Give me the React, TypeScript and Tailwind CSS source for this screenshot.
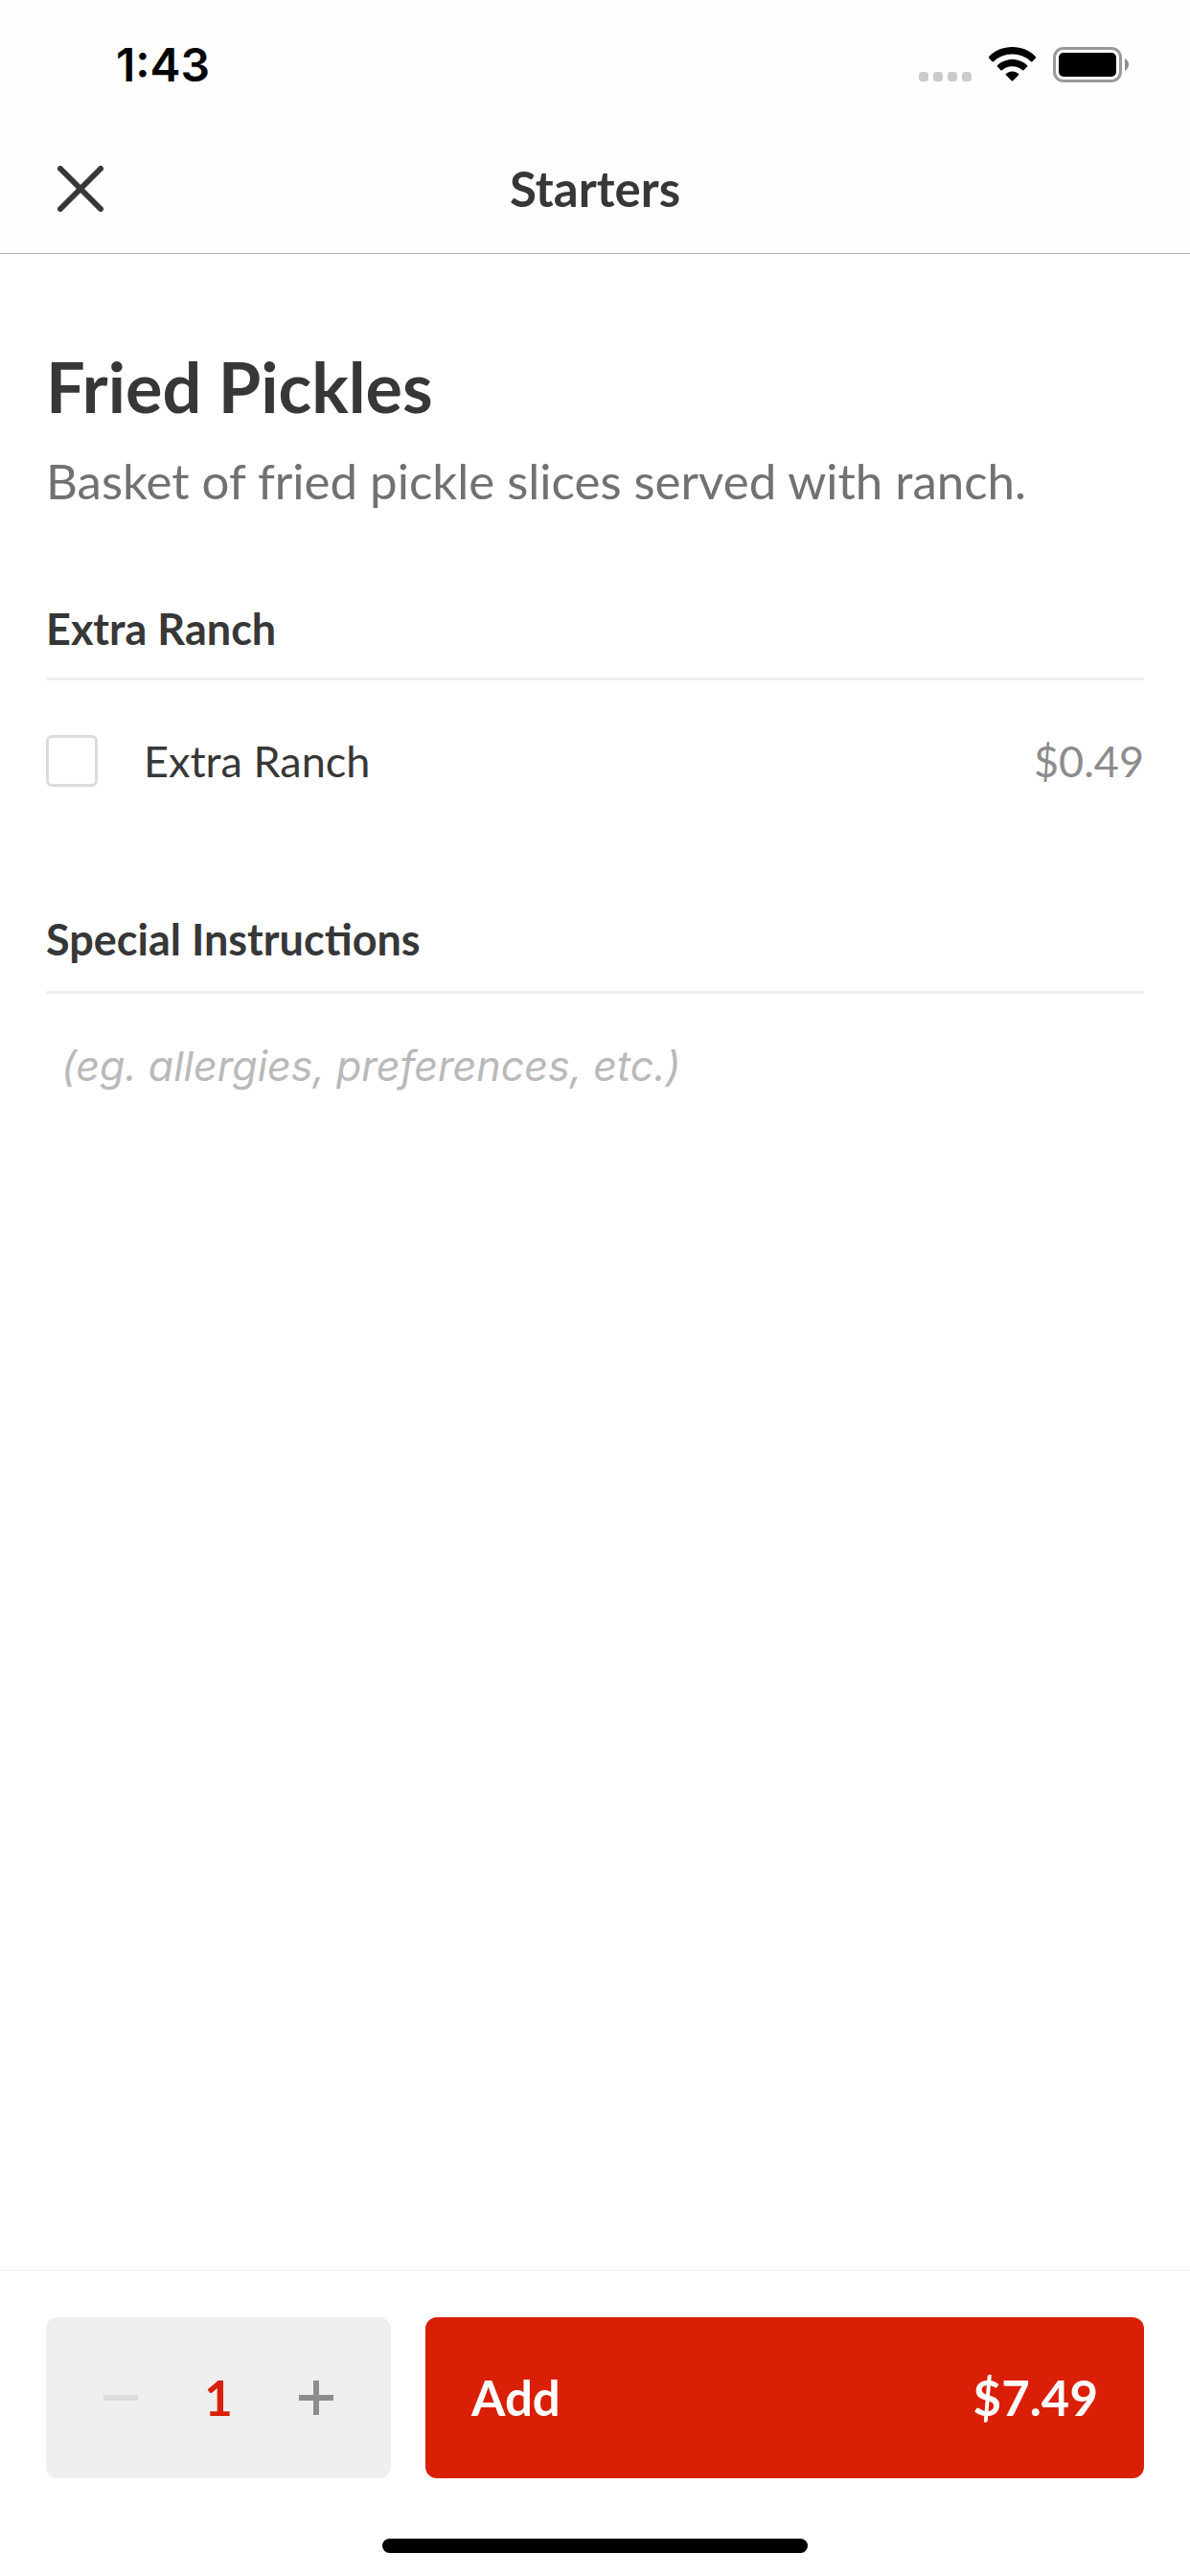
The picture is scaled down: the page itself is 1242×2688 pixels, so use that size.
import { useState } from 'react';

const UNIT_PRICE = 7.49;
const RANCH_PRICE = 0.49;

function SignalDots() {
  return (
    <svg width="55" height="37" viewBox="0 0 55 37" fill="#cbcbcb" aria-hidden="true">
      {[0, 15, 30, 45].map((x) => (
        <rect key={x} x={x} y="26" width="10" height="10" rx="3.5" />
      ))}
    </svg>
  );
}

function WifiIcon() {
  return (
    <svg width="49" height="37" viewBox="0 0 49 37" fill="#000" aria-hidden="true">
      <path d="M24.5 0C34 0 42.600 3.600 49 10.200q.6.700 0 1.400l-3.600 3.600q-.7.600-1.400 0A28 28 0 0 0 24.500 7.500 28 28 0 0 0 5 15.200q-.7.600-1.400 0L0 11.600q-.6-.7 0-1.400C6.400 3.600 15 0 24.500 0z" />
      <path d="M24.500 13C30.500 13 36 15.300 40.100 19.200q.7.700 0 1.400l-3.600 3.600q-.7.600-1.400 0A16 16 0 0 0 24.500 20.300 16 16 0 0 0 13.900 24.200q-.7.600-1.400 0L8.900 20.600q-.7-.7 0-1.400C13 15.300 18.500 13 24.500 13z" />
      <path d="M24.500 25.500c2.500 0 4.800.9 6.600 2.400q.7.700 0 1.400l-5.900 6q-.7.600-1.400 0l-5.900-6q-.7-.7 0-1.400c1.800-1.500 4.100-2.400 6.600-2.400z" />
    </svg>
  );
}

function BatteryIcon() {
  return (
    <svg width="79" height="37" viewBox="0 0 79 37" aria-hidden="true">
      <rect x="1.500" y="1.500" width="69" height="34" rx="9.500" fill="none" stroke="#999" strokeWidth="3" />
      <rect x="6" y="6" width="60" height="25" rx="5" fill="#000" />
      <path d="M75 12c2.500 1.300 4 3.700 4 6.500s-1.500 5.200-4 6.500z" fill="#8c8c8c" />
    </svg>
  );
}

export default function App() {
  const [qty, setQty] = useState(1);
  const [ranch, setRanch] = useState(false);
  const [notes, setNotes] = useState('');

  const total = qty * (UNIT_PRICE + (ranch ? RANCH_PRICE : 0));

  return (
    <div className="flex min-h-screen flex-col bg-white font-['Lato',sans-serif] text-[#373737]">
      <header className="border-b border-[#b2b2b2] bg-[#fefefe]">
        <div className="flex h-[132px] items-center justify-between pt-[3px] pr-16 pl-[121px]">
          <time className="font-['Inter',sans-serif] text-[48px] leading-none font-semibold text-black">1:43</time>
          <div className="flex items-center gap-[18px]">
            <SignalDots />
            <WifiIcon />
            <BatteryIcon />
          </div>
        </div>

        <nav className="grid h-[132px] grid-cols-[1fr_auto_1fr] items-center px-12 pb-[3px]">
          <button type="button" aria-label="Close" className="flex size-[72px] items-center justify-center">
            <svg width="48" height="48" viewBox="0 0 48 48" stroke="#373737" strokeWidth="6" strokeLinecap="round">
              <path d="M3 3l42 42M45 3L3 45" />
            </svg>
          </button>
          <h2 className="text-[51px] leading-[64px] font-bold">Starters</h2>
        </nav>
      </header>

      <main className="flex-1 px-12 pt-24">
        <h1 className="text-[72px] leading-[84px] font-bold">Fried Pickles</h1>
        <p className="mt-[25px] text-[51px] leading-[64px] text-[#717171]">Basket of fried pickle slices served with ranch.</p>

        <section className="mt-24">
          <h3 className="border-b-3 border-[#efefef] pb-[25px] text-[45px] leading-[52px] font-bold">Extra Ranch</h3>
          <label className="mt-[57px] flex h-[54px] items-center gap-12 text-[45px] leading-[52px]">
            <input
              type="checkbox"
              checked={ranch}
              onChange={(e) => setRanch(e.target.checked)}
              className="size-[54px] shrink-0 appearance-none rounded-md border-3 border-[#dcdcdc] bg-white checked:border-[#d91f06] checked:bg-[#d91f06]"
            />
            <span className="flex-1">Extra Ranch</span>
            <span className="text-[#8c8c8c]">${RANCH_PRICE.toFixed(2)}</span>
          </label>
        </section>

        <section className="mt-[133px]">
          <h3 className="border-b-3 border-[#efefef] pb-[28px] text-[45px] leading-[52px] font-bold">
            <label htmlFor="notes">Special Instructions</label>
          </h3>
          <textarea
            id="notes"
            rows={4}
            value={notes}
            onChange={(e) => setNotes(e.target.value)}
            placeholder="(eg. allergies, preferences, etc.)"
            className="mt-12 block w-full resize-none px-4 font-['Inter',sans-serif] text-[43px] leading-[54px] italic outline-none placeholder:text-[#b9b9b9]"
          />
        </section>
      </main>

      <footer className="border-t border-[#efefef] px-12 pt-12 pb-6">
        <div className="flex gap-9">
          <div className="flex h-[168px] w-[360px] items-center justify-between rounded-xl bg-[#efefef] px-12">
            <button
              type="button"
              aria-label="Decrease quantity"
              disabled={qty === 1}
              onClick={() => setQty(qty - 1)}
              className="p-3 text-[#8c8c8c] disabled:text-[#dcdcdc]"
            >
              <svg width="36" height="36" viewBox="0 0 36 36" fill="currentColor">
                <path d="M0 15h36v6H0z" />
              </svg>
            </button>
            <output className="text-[51px] leading-[64px] font-bold text-[#d91f06]">{qty}</output>
            <button
              type="button"
              aria-label="Increase quantity"
              onClick={() => setQty(qty + 1)}
              className="p-3 text-[#8c8c8c]"
            >
              <svg width="36" height="36" viewBox="0 0 36 36" fill="currentColor">
                <path d="M0 15h15V0h6v15h15v6H21v15h-6V21H0z" />
              </svg>
            </button>
          </div>
          <button
            type="button"
            className="flex h-[168px] flex-1 items-center justify-between rounded-xl bg-[#d91f06] px-12 text-[51px] leading-[64px] font-bold text-white"
          >
            <span>Add</span>
            <span>${total.toFixed(2)}</span>
          </button>
        </div>
        <div className="mx-auto mt-[63px] h-[15px] w-[444px] rounded-full bg-black" />
      </footer>
    </div>
  );
}
